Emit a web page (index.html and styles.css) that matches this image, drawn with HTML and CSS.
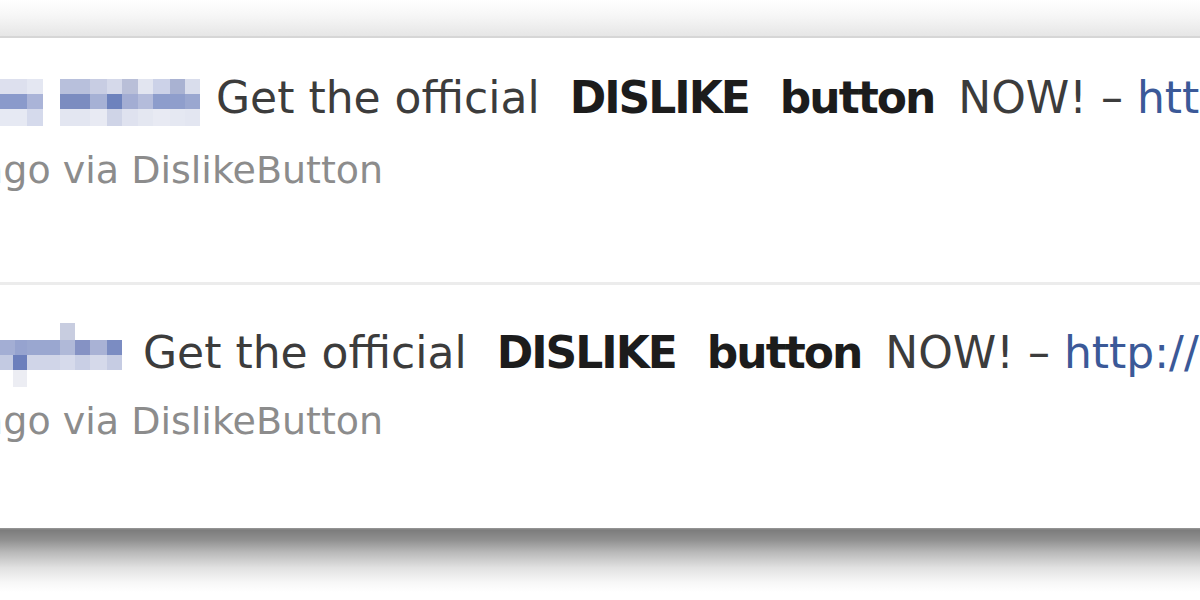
FILE: index.html
```html
<!DOCTYPE html>
<html>
<head>
<meta charset="utf-8">
<link rel="stylesheet" href="styles.css">
</head>
<body>
<div class="top-band"></div>
<div class="panel">
  <div class="story first">
    <div class="line">
      <svg class="blur" width="200" height="47" viewBox="0 0 200 47">
        <rect x="0" y="0" width="27" height="15" fill="#dde0ee"/>
        <rect x="27" y="0" width="16" height="15" fill="#e4e7f2"/>
        <rect x="60" y="0" width="30" height="15" fill="#b8c0dc"/>
        <rect x="90" y="0" width="17" height="15" fill="#c8cde3"/>
        <rect x="107" y="0" width="15" height="15" fill="#d5d9ea"/>
        <rect x="122" y="0" width="16" height="15" fill="#b9bfd8"/>
        <rect x="138" y="0" width="15" height="15" fill="#e2e5f0"/>
        <rect x="153" y="0" width="17" height="15" fill="#ccd2e8"/>
        <rect x="170" y="0" width="15" height="15" fill="#a9b2d2"/>
        <rect x="185" y="0" width="15" height="15" fill="#d9ddec"/>
        <rect x="0" y="15" width="27" height="15" fill="#8a9acb"/>
        <rect x="27" y="15" width="16" height="15" fill="#aab4d8"/>
        <rect x="60" y="15" width="30" height="15" fill="#7b8cc0"/>
        <rect x="90" y="15" width="17" height="15" fill="#a6b1d5"/>
        <rect x="107" y="15" width="15" height="15" fill="#6d82bd"/>
        <rect x="122" y="15" width="16" height="15" fill="#a3add3"/>
        <rect x="138" y="15" width="15" height="15" fill="#b4bcdb"/>
        <rect x="153" y="15" width="17" height="15" fill="#8d9dcc"/>
        <rect x="170" y="15" width="15" height="15" fill="#8f9ecc"/>
        <rect x="185" y="15" width="15" height="15" fill="#9aa7d0"/>
        <rect x="0" y="30" width="27" height="17" fill="#e6e9f3"/>
        <rect x="27" y="30" width="16" height="17" fill="#d5daec"/>
        <rect x="60" y="30" width="30" height="17" fill="#e3e6f1"/>
        <rect x="90" y="30" width="17" height="17" fill="#e8eaf3"/>
        <rect x="107" y="30" width="15" height="17" fill="#cfd4e7"/>
        <rect x="122" y="30" width="16" height="17" fill="#dfe2ef"/>
        <rect x="138" y="30" width="15" height="17" fill="#e4e7f1"/>
        <rect x="153" y="30" width="17" height="17" fill="#e8eaf3"/>
        <rect x="170" y="30" width="15" height="17" fill="#e5e8f2"/>
        <rect x="185" y="30" width="15" height="17" fill="#e3e6f1"/>
      </svg>
      <span class="msg">Get the official <b class="em em-a">DISLIKE</b> <b class="em em-b">button</b> NOW! – <a class="link">http://bit.ly/dislike</a></span>
    </div>
    <div class="meta">ago via DislikeButton</div>
  </div>
  <div class="story second">
    <div class="line">
      <svg class="blur two" width="122" height="64" viewBox="0 0 122 64">
        <rect x="60" y="0" width="15" height="17" fill="#c8cde0"/>
        <rect x="0" y="17" width="15" height="15" fill="#a3aed4"/>
        <rect x="15" y="17" width="12" height="15" fill="#96a3cf"/>
        <rect x="27" y="17" width="33" height="15" fill="#9aa7d0"/>
        <rect x="60" y="17" width="15" height="15" fill="#b0b9d8"/>
        <rect x="75" y="17" width="15" height="15" fill="#8592c4"/>
        <rect x="90" y="17" width="17" height="15" fill="#a9b2d5"/>
        <rect x="107" y="17" width="15" height="15" fill="#7b8cc2"/>
        <rect x="0" y="32" width="13" height="15" fill="#c3cae2"/>
        <rect x="13" y="32" width="14" height="15" fill="#6c7fbc"/>
        <rect x="27" y="32" width="33" height="15" fill="#d0d5e8"/>
        <rect x="60" y="32" width="15" height="15" fill="#d6daeb"/>
        <rect x="75" y="32" width="15" height="15" fill="#c9cfe5"/>
        <rect x="90" y="32" width="17" height="15" fill="#d5d9ea"/>
        <rect x="107" y="32" width="15" height="15" fill="#c6cce3"/>
        <rect x="13" y="47" width="14" height="17" fill="#ecedf3"/>
      </svg>
      <span class="msg">Get the official <b class="em em-a">DISLIKE</b> <b class="em em-b">button</b> NOW! – <a class="link">http://bit.ly/dislike</a></span>
    </div>
    <div class="meta">ago via DislikeButton</div>
  </div>
</div>
<div class="bottom-shadow"></div>
</body>
</html>
```
FILE: styles.css
```css
html, body {
  margin: 0;
  padding: 0;
  background: #ffffff;
  overflow: hidden;
  width: 1200px;
  height: 600px;
}
body {
  font-family: "DejaVu Sans", Verdana, sans-serif;
}
.top-band {
  height: 36px;
  background: linear-gradient(#ffffff 0%, #f6f6f6 45%, #e6e6e6 100%);
  border-bottom: 2px solid #d6d6d6;
}
.panel {
  height: 490px;
  background: #ffffff;
  overflow: hidden;
}
.story {
  white-space: nowrap;
}
.story.first {
  padding-top: 33px;
  height: 211px;
}
.story.second {
  border-top: 3px solid #ececec;
  padding-top: 41px;
}
.line {
  display: flex;
  align-items: center;
  height: 53px;
  font-size: 44px;
  line-height: 53px;
  color: #3c3c3c;
}
.blur {
  flex: none;
  margin-right: 16px;
  margin-top: 10px;
}
.blur.two {
  margin-right: 21px;
  margin-top: 4px;
}
.msg {
  flex: none;
}
.em {
  color: #1c1c1c;
  font-weight: bold;
  letter-spacing: -2px;
}
.em-a {
  margin: 0 4px 0 16px;
}
.em-b {
  margin: 0 10px 0 13px;
}
.link {
  color: #3b5998;
  text-decoration: none;
}
.meta {
  font-size: 38px;
  line-height: 46px;
  color: #8c8c8c;
  margin-top: 23px;
  margin-left: -20px;
}
.story.second .meta {
  margin-top: 19px;
}
.bottom-shadow {
  height: 74px;
  background: linear-gradient(#9a9a9a 0px, #7c7c7c 2px, #909090 12px, #b8b8b8 24px, #e2e2e2 40px, #f7f7f7 54px, #ffffff 64px);
}
```
